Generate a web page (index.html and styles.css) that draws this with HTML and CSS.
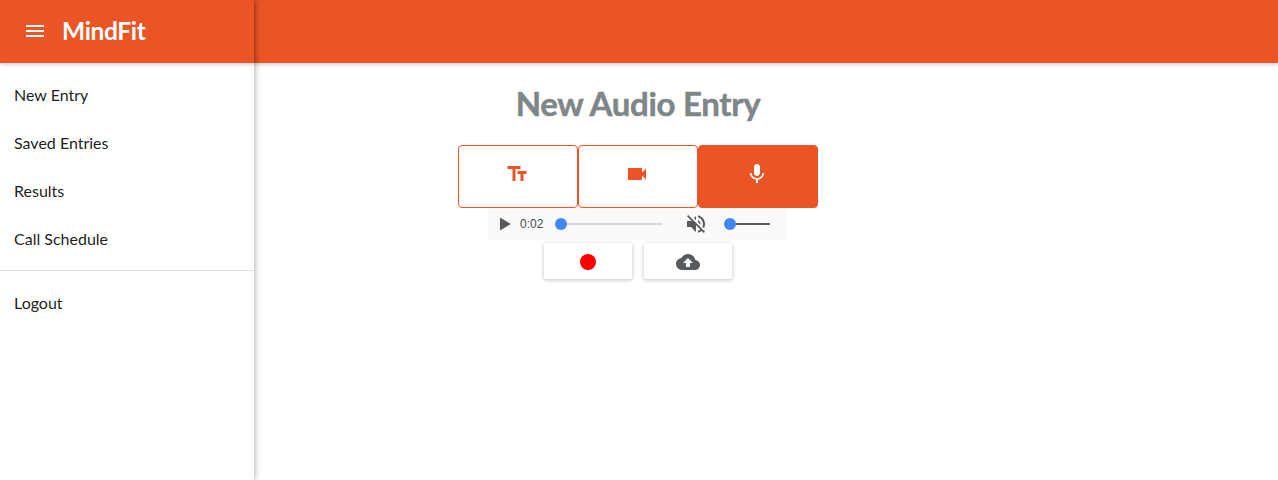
FILE: index.html
```html
<!DOCTYPE html>
<html lang="en">
<head>
<meta charset="utf-8">
<title>MindFit</title>
<link rel="stylesheet" href="styles.css">
</head>
<body>
<div class="app">
  <aside class="sidebar">
    <header class="brand">
      <svg class="icon" viewBox="0 0 24 24"><path d="M3 18h18v-2H3v2zm0-5h18v-2H3v2zm0-7v2h18V6H3z"/></svg>
      <h1 class="brand-name">MindFit</h1>
    </header>
    <nav class="menu">
      <a class="menu-item">New Entry</a>
      <a class="menu-item">Saved Entries</a>
      <a class="menu-item">Results</a>
      <a class="menu-item">Call Schedule</a>
      <hr class="divider">
      <a class="menu-item">Logout</a>
    </nav>
  </aside>
  <div class="page">
    <div class="topbar"></div>
    <main class="content">
      <h2 class="title">New Audio Entry</h2>
      <div class="tabs">
        <button class="tab"><svg class="icon" viewBox="0 0 24 24"><path d="M2.500 4v3h5v12h3V7h5V4h-13zm19 5h-9v3h3v7h3v-7h3V9z"/></svg></button>
        <button class="tab"><svg class="icon" viewBox="0 0 24 24"><path d="M17 10.500V7c0-.55-.45-1-1-1H4c-.55 0-1 .45-1 1v10c0 .55.45 1 1 1h12c.55 0 1-.45 1-1v-3.500l4 4v-11l-4 4z"/></svg></button>
        <button class="tab active"><svg class="icon" viewBox="0 0 24 24"><path d="M12 14c1.660 0 2.990-1.340 2.990-3L15 5c0-1.660-1.340-3-3-3S9 3.340 9 5v6c0 1.660 1.340 3 3 3zm5.300-3c0 3-2.540 5.100-5.300 5.100S6.700 14 6.700 11H5c0 3.410 2.720 6.230 6 6.720V21h2v-3.280c3.280-.48 6-3.300 6-6.720h-1.700z"/></svg></button>
      </div>
      <div class="player">
        <svg class="play" viewBox="0 0 12 14"><path d="M0 0l12 7-12 7z"/></svg>
        <span class="time">0:02</span>
        <div class="track seek"><span class="thumb"></span></div>
        <svg class="mute" viewBox="0 0 24 24"><path d="M16.500 12c0-1.770-1.020-3.290-2.500-4.030v2.210l2.450 2.450c.03-.2.050-.41.050-.63zm2.500 0c0 .94-.2 1.820-.54 2.640l1.510 1.510C20.630 14.910 21 13.500 21 12c0-4.280-2.990-7.860-7-8.770v2.060c2.890.86 5 3.540 5 6.710zM4.270 3L3 4.270 7.730 9H3v6h4l5 5v-6.730l4.250 4.250c-.67.520-1.420.930-2.250 1.180v2.060c1.380-.31 2.630-.95 3.690-1.810L19.730 21 21 19.730l-9-9L4.270 3zM12 4L9.910 6.090 12 8.180V4z"/></svg>
        <div class="track volume"><span class="thumb"></span></div>
      </div>
      <div class="actions">
        <button class="action"><span class="record"></span></button>
        <button class="action"><svg class="icon" viewBox="0 0 24 24"><path d="M19.350 10.040C18.670 6.590 15.640 4 12 4 9.110 4 6.600 5.640 5.350 8.040 2.340 8.360 0 10.910 0 14c0 3.310 2.690 6 6 6h13c2.760 0 5-2.240 5-5 0-2.640-2.050-4.780-4.650-4.960zM14 13v4h-4v-4H7l5-5 5 5h-3z"/></svg></button>
      </div>
    </main>
  </div>
</div>
</body>
</html>
```
FILE: styles.css
```css
* { box-sizing: border-box; }
body { margin: 0; font-family: Lato, sans-serif; background: #fff; overflow: hidden; }
svg { display: block; fill: currentColor; }
button { font: inherit; padding: 0; }
.app { display: flex; height: 480px; }
.sidebar { width: 254px; flex: none; position: relative; z-index: 1; background: #fff; box-shadow: 0 0 7px rgba(0,0,0,.4); }
.brand { height: 63px; display: flex; align-items: center; gap: 15px; padding: 0 0 2px 23px; background: #eb5424; color: #fff; box-shadow: 0 1px 4px rgba(0,0,0,.25); }
.icon { width: 24px; height: 24px; }
.brand-name { margin: 0; font-size: 24.5px; line-height: 32px; font-weight: 700; letter-spacing: -.35px; }
.menu { padding-top: 7px; }
.menu-item { display: flex; align-items: center; height: 48px; padding-left: 14px; font-size: 16px; color: rgba(0,0,0,.9); }
.divider { margin: 8px 0 7px; border: 0; height: 1px; background: #dedede; }
.page { flex: 1; }
.topbar { height: 63px; background: #eb5424; box-shadow: 0 1px 4px rgba(0,0,0,.25); }
.content { width: 360px; margin-left: 204px; display: flex; flex-direction: column; align-items: center; }
.title { margin: 20px 0 22px; font-size: 33px; line-height: 40px; font-weight: 700; letter-spacing: -.3px; color: #808687; -webkit-text-stroke: .5px #808687; white-space: nowrap; }
.tabs { display: flex; }
.tab { width: 120px; height: 63px; display: flex; justify-content: center; padding: 16px 2px 0 0; background: #fff; color: #eb5424; border: 1px solid #eb5424; border-radius: 4px; }
.tab.active { background: #eb5424; color: #fff; }
.player { width: 300px; height: 32px; display: flex; align-items: center; background: #fafafa; color: #5a5a5a; padding-left: 12px; }
.play { width: 11px; height: 14px; }
.time { width: 35px; margin-left: 9px; font: 12px "Liberation Sans", sans-serif; color: #484848; }
.track { height: 2px; display: flex; align-items: center; }
.seek { width: 107px; background: #d8d8d8; }
.volume { width: 46px; margin-left: 16px; background: #5a5a5a; }
.thumb { width: 12px; height: 12px; flex: none; border-radius: 50%; background: #4285f4; }
.mute { width: 24px; height: 24px; margin-left: 22px; }
.actions { display: flex; gap: 12px; margin-top: 3px; }
.action { width: 88px; height: 36px; display: flex; align-items: center; justify-content: center; padding-top: 2px; border: 0; border-radius: 2px; background: #fff; color: #585b5d; box-shadow: 0 1px 4px rgba(0,0,0,.26); }
.record { width: 16px; height: 16px; border-radius: 50%; background: #f00; }
```
